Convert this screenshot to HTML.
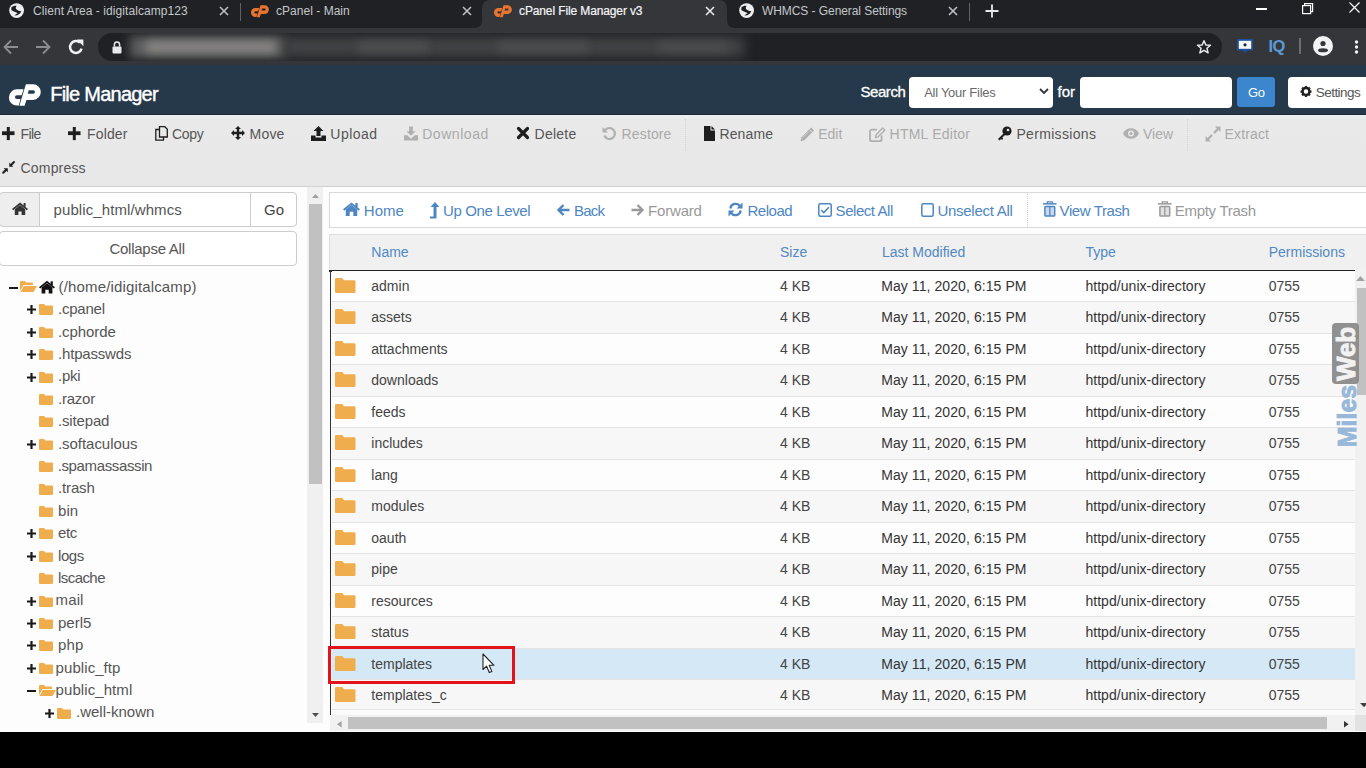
<!DOCTYPE html><html><head><meta charset="utf-8"><title>cPanel File Manager v3</title><style>
*{box-sizing:border-box}
html,body{margin:0;padding:0}
body{width:1366px;height:768px;overflow:hidden;position:relative;background:#000;font-family:"Liberation Sans",sans-serif}
.t{position:absolute;white-space:nowrap;line-height:1}
.a{position:absolute}
svg{position:absolute;overflow:visible}
</style></head><body>
<div class="a" style="left:0;top:0;width:1366px;height:28px;background:#202124"></div>
<div class="a" style="left:482px;top:0;width:245px;height:28px;background:#35363a;border-radius:8px 8px 0 0"></div>
<svg style="left:474px;top:20px" width="8" height="8"><path d="M0 8 Q8 8 8 0 L8 8 Z" fill="#35363a"/></svg>
<svg style="left:727px;top:20px" width="8" height="8"><path d="M8 8 Q0 8 0 0 L0 8 Z" fill="#35363a"/></svg>
<svg style="left:9.200000000000001px;top:3.200000000000001px" width="15.2" height="15.2" viewBox="0 0 16 16"><circle cx="8" cy="8" r="7.8" fill="#eceef0"/><path d="M2.6 4.6 C3.8 3.4 5.6 2.8 8 3 L7.2 4.6 C6.9 5.6 7.4 6.6 8.6 7.3 C10 8.1 11.6 8.6 13 8.8 C12.2 10.6 10.6 12.4 8.6 13 L5.8 13.2 C6.6 12.2 7.8 11.6 9.2 10.8 C8.2 9.6 6.4 9.4 4.6 8.6 C3.6 8 3 7.6 2.4 7.4 Z" fill="#1c1d20"/></svg>
<div class="t" style="left:33px;top:4.84px;font-size:12px;color:#c4c7cb;letter-spacing:0.07px">Client Area - idigitalcamp123</div>
<svg style="left:219px;top:6px" width="10" height="10"><path d="M1 1 L9 9 M9 1 L1 9" stroke="#bdc1c6" stroke-width="1.6"/></svg>
<div class="a" style="left:240px;top:3px;width:1px;height:18px;background:#5f6368"></div>
<svg style="left:251px;top:4.5px" width="18" height="12.4" viewBox="0 0 32 22"><path d="M14.6 5.3 H8 A8.1 8.1 0 0 0 8 21.5 H9.8 L11.5 15 H7.9 A1.9 1.9 0 0 1 7.9 11.2 H12.6 Z" fill="#e8752f"/><path fill-rule="evenodd" d="M16.9 0.3 H24 A7.8 7.8 0 0 1 24 15.9 H17.4 L15.6 21.7 H10.4 Z M19.7 6.2 H24.2 A1.75 1.75 0 0 1 24.2 9.7 H18.8 Z" fill="#e8752f"/></svg>
<div class="t" style="left:276px;top:4.84px;font-size:12px;color:#c4c7cb;letter-spacing:0.03px">cPanel - Main</div>
<svg style="left:462px;top:6px" width="10" height="10"><path d="M1 1 L9 9 M9 1 L1 9" stroke="#bdc1c6" stroke-width="1.6"/></svg>
<svg style="left:494px;top:4.5px" width="18" height="12.4" viewBox="0 0 32 22"><path d="M14.6 5.3 H8 A8.1 8.1 0 0 0 8 21.5 H9.8 L11.5 15 H7.9 A1.9 1.9 0 0 1 7.9 11.2 H12.6 Z" fill="#e8752f"/><path fill-rule="evenodd" d="M16.9 0.3 H24 A7.8 7.8 0 0 1 24 15.9 H17.4 L15.6 21.7 H10.4 Z M19.7 6.2 H24.2 A1.75 1.75 0 0 1 24.2 9.7 H18.8 Z" fill="#e8752f"/></svg>
<div class="t" style="left:519px;top:4.84px;font-size:12px;color:#f4f5f6;letter-spacing:-0.12px;-webkit-text-stroke:0.2px #f4f5f6">cPanel File Manager v3</div>
<svg style="left:705px;top:6px" width="10" height="10"><path d="M1 1 L9 9 M9 1 L1 9" stroke="#e8eaed" stroke-width="1.6"/></svg>
<svg style="left:738.9px;top:3.200000000000001px" width="15.2" height="15.2" viewBox="0 0 16 16"><circle cx="8" cy="8" r="7.8" fill="#eceef0"/><path d="M2.6 4.6 C3.8 3.4 5.6 2.8 8 3 L7.2 4.6 C6.9 5.6 7.4 6.6 8.6 7.3 C10 8.1 11.6 8.6 13 8.8 C12.2 10.6 10.6 12.4 8.6 13 L5.8 13.2 C6.6 12.2 7.8 11.6 9.2 10.8 C8.2 9.6 6.4 9.4 4.6 8.6 C3.6 8 3 7.6 2.4 7.4 Z" fill="#1c1d20"/></svg>
<div class="t" style="left:762px;top:4.84px;font-size:12px;color:#c4c7cb;letter-spacing:-0.07px">WHMCS - General Settings</div>
<svg style="left:948px;top:6px" width="10" height="10"><path d="M1 1 L9 9 M9 1 L1 9" stroke="#bdc1c6" stroke-width="1.6"/></svg>
<div class="a" style="left:969px;top:3px;width:1px;height:18px;background:#5f6368"></div>
<svg style="left:985px;top:4px" width="14" height="14"><path d="M7 0.5 V13.5 M0.5 7 H13.5" stroke="#e8eaed" stroke-width="1.8"/></svg>
<div class="a" style="left:1256px;top:8px;width:11px;height:1.5px;background:#fff"></div>
<svg style="left:1302px;top:3px" width="12" height="11"><rect x="0.6" y="2.6" width="8" height="8" fill="none" stroke="#fff" stroke-width="1.2"/><path d="M2.6 2.6 V0.6 H10.6 V8.6 H8.6" fill="none" stroke="#fff" stroke-width="1.2"/></svg>
<svg style="left:1349px;top:2px" width="11" height="11"><path d="M0.5 0.5 L10.5 10.5 M10.5 0.5 L0.5 10.5" stroke="#fff" stroke-width="1.2"/></svg>
<div class="a" style="left:0;top:28px;width:1366px;height:37px;background:#35363a"></div>
<svg style="left:3px;top:39px" width="16" height="16"><path d="M15 8 H2 M8 1.5 L1.5 8 L8 14.5" fill="none" stroke="#8c8d90" stroke-width="1.8"/></svg>
<svg style="left:35px;top:39px" width="16" height="16"><path d="M1 8 H14 M8 1.5 L14.5 8 L8 14.5" fill="none" stroke="#8c8d90" stroke-width="1.8"/></svg>
<svg style="left:68px;top:38.5px" width="16" height="16"><path d="M13.6 9.6 A5.9 5.9 0 1 1 11.9 3.6" fill="none" stroke="#f1f3f4" stroke-width="2.5"/><path d="M8.8 0.6 H15.4 V7.2 Z" fill="#f1f3f4"/></svg>
<div class="a" style="left:98px;top:33px;width:1124px;height:28px;border-radius:14px;background:#202124;overflow:hidden"><div class="a" style="left:32px;top:3px;width:156px;height:22px;background:#5c5d5f;filter:blur(5px)"></div><div class="a" style="left:48px;top:8px;width:130px;height:12px;background:#8e8c88;filter:blur(5px);opacity:.9"></div><div class="a" style="left:186px;top:4px;width:460px;height:20px;background:#424346;filter:blur(6px)"></div><div class="a" style="left:260px;top:9px;width:70px;height:10px;background:#4e4f51;filter:blur(4px)"></div><div class="a" style="left:400px;top:9px;width:90px;height:10px;background:#4d4e50;filter:blur(4px)"></div><div class="a" style="left:560px;top:9px;width:70px;height:10px;background:#4b4c4e;filter:blur(4px)"></div></div>
<svg style="left:111.5px;top:40.5px" width="10" height="13"><path d="M2.4 5.5 V3.6 A2.6 2.6 0 0 1 7.6 3.6 V5.5" fill="none" stroke="#e8eaed" stroke-width="1.5"/><rect x="0.5" y="5.5" width="9" height="7" rx="1" fill="#e8eaed"/></svg>
<svg style="left:1196px;top:39px" width="16" height="16" viewBox="0 0 24 24"><path d="M12 2.5 L14.8 9 L21.8 9.4 L16.4 13.9 L18.2 20.8 L12 17 L5.8 20.8 L7.6 13.9 L2.2 9.4 L9.2 9 Z" fill="none" stroke="#e8eaed" stroke-width="2.2" stroke-linejoin="round"/></svg>
<svg style="left:1236px;top:38px" width="18" height="17"><path d="M1 1 H17 V12.5 H11 L9 15.5 L7 12.5 H1 Z" fill="#1d4f9a"/><rect x="2.8" y="2.8" width="12.4" height="8" fill="#f4f6f8"/><circle cx="9" cy="6.8" r="1.6" fill="#102a5c"/></svg>
<div class="t" style="left:1268.5px;top:38.33px;font-size:16.5px;color:#5b9bd5;font-weight:bold;letter-spacing:-0.6px">IQ</div>
<div class="a" style="left:1299px;top:38px;width:1.5px;height:16px;background:#6b6d70"></div>
<svg style="left:1313px;top:36px" width="20" height="20"><circle cx="10" cy="10" r="10" fill="#f1f3f4"/><circle cx="10" cy="7.5" r="2.6" fill="#35363a"/><ellipse cx="10" cy="14.3" rx="5" ry="2" fill="#35363a"/></svg>
<svg style="left:1354px;top:40px" width="5" height="15"><circle cx="2.5" cy="2" r="1.7" fill="#f1f3f4"/><circle cx="2.5" cy="7" r="1.7" fill="#f1f3f4"/><circle cx="2.5" cy="12" r="1.7" fill="#f1f3f4"/></svg>
<div class="a" style="left:0;top:65px;width:1366px;height:50px;background:#26394b;border-bottom:1px solid #1b2735"></div>
<svg style="left:9px;top:83.5px" width="32" height="22" viewBox="0 0 32 22"><path d="M14.6 5.3 H8 A8.1 8.1 0 0 0 8 21.5 H9.8 L11.5 15 H7.9 A1.9 1.9 0 0 1 7.9 11.2 H12.6 Z" fill="#ffffff"/><path fill-rule="evenodd" d="M16.9 0.3 H24 A7.8 7.8 0 0 1 24 15.9 H17.4 L15.6 21.7 H10.4 Z M19.7 6.2 H24.2 A1.75 1.75 0 0 1 24.2 9.7 H18.8 Z" fill="#ffffff"/></svg>
<div class="t" style="left:50.2px;top:84.47px;font-size:20px;color:#ffffff;letter-spacing:-0.75px;-webkit-text-stroke:0.4px #fff">File Manager</div>
<div class="t" style="left:860.5px;top:83.70px;font-size:15px;color:#ffffff;letter-spacing:-0.45px;-webkit-text-stroke:0.3px #fff">Search</div>
<div class="a" style="left:909px;top:77px;width:144px;height:31px;background:#fff;border-radius:4px"></div>
<div class="t" style="left:924.2px;top:86.20px;font-size:13px;color:#6a6a6a;letter-spacing:-0.28px">All Your Files</div>
<svg style="left:1039px;top:88px" width="10" height="7"><path d="M1 1 L5 5 L9 1" fill="none" stroke="#333" stroke-width="1.8"/></svg>
<div class="t" style="left:1057.5px;top:83.70px;font-size:15px;color:#ffffff;-webkit-text-stroke:0.3px #fff">for</div>
<div class="a" style="left:1080px;top:77px;width:152px;height:31px;background:#fff;border-radius:4px"></div>
<div class="a" style="left:1237px;top:77px;width:38px;height:30px;background:#3b86cc;border-radius:3px"></div>
<div class="t" style="left:1248px;top:86.00px;font-size:13px;color:#ffffff;letter-spacing:-0.3px">Go</div>
<div class="a" style="left:1288px;top:77px;width:90px;height:31px;background:#fff;border-radius:4px"></div>
<svg style="left:1300px;top:85px" width="12" height="13" viewBox="0 0 24 24"><path d="M12 8a4 4 0 1 0 0.01 0Z M10 1 H14 L14.6 4 L17.3 5.2 L19.9 3.5 L22.7 6.3 L21 8.9 L22.1 11.5 L25 12.1 V15.9" fill="none"/><circle cx="12" cy="12" r="7" fill="none" stroke="#222" stroke-width="5"/><g stroke="#222" stroke-width="4.5"><path d="M12 1 V5 M12 19 V23 M1 12 H5 M19 12 H23 M4.2 4.2 L7 7 M17 17 L19.8 19.8 M4.2 19.8 L7 17 M17 7 L19.8 4.2"/></g></svg>
<div class="t" style="left:1315.8px;top:85.77px;font-size:13.5px;color:#555;letter-spacing:-0.55px">Settings</div>
<div class="a" style="left:0;top:115px;width:1366px;height:72px;background:linear-gradient(#eef0f1 0px,#e9e9e9 5px,#e8e8e8 100%);border-bottom:1px solid #d2d2d2"></div>
<svg style="left:1.9px;top:126.7px" width="13" height="14"><rect x="0" y="4.3" width="12.5" height="3.8" fill="#1e1e1e"/><rect x="4.8" y="0" width="3" height="13.1" fill="#1e1e1e"/></svg>
<div class="t" style="left:20.5px;top:127.05px;font-size:14px;color:#555555;letter-spacing:-0.55px">File</div>
<svg style="left:67.9px;top:126.7px" width="13" height="14"><rect x="0" y="4.3" width="12.5" height="3.8" fill="#1e1e1e"/><rect x="4.8" y="0" width="3" height="13.1" fill="#1e1e1e"/></svg>
<div class="t" style="left:87px;top:127.05px;font-size:14px;color:#555555;letter-spacing:0.16px">Folder</div>
<svg style="left:155px;top:126px" width="13" height="15"><path d="M4.5 3.5 H0.8 V14.2 H8.5 V11" fill="none" stroke="#1e1e1e" stroke-width="1.3"/><path d="M4.5 0.7 H9.8 L12.3 3.2 V11 H4.5 Z" fill="none" stroke="#1e1e1e" stroke-width="1.3"/></svg>
<div class="t" style="left:172px;top:127.05px;font-size:14px;color:#555555;letter-spacing:-0.29px">Copy</div>
<svg style="left:231px;top:126px" width="14" height="14" viewBox="0 0 14 14"><path d="M7 0 L10 3 H8.2 V5.8 H11 V4 L14 7 L11 10 V8.2 H8.2 V11 H10 L7 14 L4 11 H5.8 V8.2 H3 V10 L0 7 L3 4 V5.8 H5.8 V3 H4 Z" fill="#1e1e1e"/></svg>
<div class="t" style="left:249.5px;top:127.05px;font-size:14px;color:#555555;letter-spacing:0.22px">Move</div>
<svg style="left:311px;top:126px" width="15" height="15" viewBox="0 0 15 15"><path d="M7.5 0 L12.5 5 H9.5 V10 H5.5 V5 H2.5 Z" fill="#1e1e1e"/><path d="M0 9.5 H4.5 V11.5 H10.5 V9.5 H15 V15 H0 Z" fill="#1e1e1e"/></svg>
<div class="t" style="left:330.3px;top:127.05px;font-size:14px;color:#555555;letter-spacing:0.47px">Upload</div>
<svg style="left:404px;top:126px" width="14" height="15" viewBox="0 0 15 15"><path d="M5.5 0 H9.5 V5 H12.5 L7.5 10 L2.5 5 H5.5 Z" fill="#b0b0b0"/><path d="M0 9.5 H3.5 L7.5 13 L11.5 9.5 H15 V15 H0 Z" fill="#b0b0b0"/></svg>
<div class="t" style="left:422.2px;top:127.05px;font-size:14px;color:#aaaaaa;letter-spacing:0.55px">Download</div>
<svg style="left:517px;top:127px" width="12" height="12"><path d="M1.5 1.5 L10.5 10.5 M10.5 1.5 L1.5 10.5" stroke="#1e1e1e" stroke-width="3.2" stroke-linecap="round"/></svg>
<div class="t" style="left:534.5px;top:127.05px;font-size:14px;color:#555555;letter-spacing:0.27px">Delete</div>
<svg style="left:602px;top:126px" width="15" height="15" viewBox="0 0 15 15"><path d="M3.2 4 A5.5 5.5 0 1 1 2.3 9.5" fill="none" stroke="#b0b0b0" stroke-width="2.2"/><path d="M0.5 1 V6.5 H6 Z" fill="#b0b0b0"/></svg>
<div class="t" style="left:621.6px;top:127.05px;font-size:14px;color:#aaaaaa;letter-spacing:0.13px">Restore</div>
<div class="a" style="left:685px;top:119px;width:0;height:32px;border-left:1px dotted #d3d3d3"></div>
<svg style="left:704px;top:126px" width="11" height="15" viewBox="0 0 11 15"><path d="M0 0 H6.5 V4.5 H11 V15 H0 Z" fill="#1e1e1e"/><path d="M7.5 0 L11 3.5 H7.5 Z" fill="#1e1e1e"/></svg>
<div class="t" style="left:719.4px;top:127.05px;font-size:14px;color:#555555;letter-spacing:0.14px">Rename</div>
<svg style="left:799.8px;top:127px" width="15" height="15" viewBox="0 0 15 15"><path d="M11 0.6 L14 3.6 L4.4 13.2 L0.6 14.2 L1.5 10.2 Z" fill="#b0b0b0"/><path d="M9.2 2.4 L12.2 5.4" stroke="#e8e8e8" stroke-width="0.9"/><path d="M2.6 10.6 L8.6 4.6" stroke="#d2d2d2" stroke-width="0.8"/></svg>
<div class="t" style="left:818.2px;top:127.05px;font-size:14px;color:#aaaaaa;letter-spacing:-0.01px">Edit</div>
<svg style="left:869px;top:126.5px" width="17" height="15" viewBox="0 0 17 15"><path d="M8 2.6 H3 Q1 2.6 1 4.6 V12.2 Q1 14.2 3 14.2 H10.6 Q12.6 14.2 12.6 12.2 V8.6" fill="none" stroke="#b0b0b0" stroke-width="1.8"/><path d="M13.6 1 L15.8 3.2 L9.2 9.8 L6.4 10.6 L7.2 7.8 Z" fill="none" stroke="#b0b0b0" stroke-width="1.4" stroke-linejoin="round"/></svg>
<div class="t" style="left:889.6px;top:127.05px;font-size:14px;color:#aaaaaa;letter-spacing:0.23px">HTML Editor</div>
<svg style="left:997px;top:126px" width="15" height="15" viewBox="0 0 15 15"><circle cx="10" cy="5" r="4.6" fill="#1e1e1e"/><circle cx="11" cy="4" r="1.3" fill="#e8e8e8"/><path d="M7 7 L1 13 L2.5 14.5 L4 13 L5 14 L6.2 12.8 L5.2 11.8 L9 8" fill="#1e1e1e"/></svg>
<div class="t" style="left:1016.4px;top:127.05px;font-size:14px;color:#555555;letter-spacing:0.33px">Permissions</div>
<svg style="left:1123px;top:128px" width="16" height="11" viewBox="0 0 16 11"><path d="M0 5.5 C3 -1.5 13 -1.5 16 5.5 C13 12.5 3 12.5 0 5.5 Z" fill="#b0b0b0"/><circle cx="8" cy="5.5" r="3" fill="#e8e8e8"/><circle cx="8" cy="5.5" r="1.6" fill="#b0b0b0"/></svg>
<div class="t" style="left:1143px;top:127.05px;font-size:14px;color:#aaaaaa;letter-spacing:-0.03px">View</div>
<div class="a" style="left:1187px;top:119px;width:0;height:32px;border-left:1px dotted #d3d3d3"></div>
<svg style="left:1205px;top:125.5px" width="16" height="16" viewBox="0 0 16 16"><path d="M10 0.6 H15.4 V6 Z M0.6 10 V15.4 H6 Z" fill="#b0b0b0"/><path d="M13.2 2.8 L9.6 6.4 M2.8 13.2 L6.4 9.6" stroke="#b0b0b0" stroke-width="2.2" stroke-linecap="round"/></svg>
<div class="t" style="left:1224.6px;top:127.05px;font-size:14px;color:#aaaaaa;letter-spacing:0.14px">Extract</div>
<svg style="left:2px;top:161px" width="13" height="13" viewBox="0 0 13 13"><path d="M12 1 L8.8 4.2 M1.2 11.8 L4.2 8.8" stroke="#1e1e1e" stroke-width="2" stroke-linecap="round"/><path d="M7.3 5.8 V1.6 L11.3 5.8 Z M5.8 7.3 V11.3 L1.6 7.3 Z" fill="#1e1e1e"/></svg>
<div class="t" style="left:20.5px;top:161.35px;font-size:14px;color:#555555;letter-spacing:0.19px">Compress</div>
<div class="a" style="left:0;top:187px;width:1366px;height:545px;background:#fdfdfd"></div>
<div class="a" style="left:-1px;top:192px;width:41px;height:35px;background:#eeeeee;border:1px solid #cccccc;border-radius:4px 0 0 4px"></div>
<svg style="left:12px;top:202px" width="16" height="13" viewBox="0 0 16 13"><path d="M8 0.5 L16 7 L14.8 8.3 L8 2.8 L1.2 8.3 L0 7 Z" fill="#333"/><path d="M2.8 7.2 L8 3 L13.2 7.2 V13 H9.6 V9.4 H6.4 V13 H2.8 Z" fill="#333"/><rect x="11.6" y="1" width="2" height="3.6" fill="#333"/></svg>
<div class="a" style="left:39px;top:192px;width:212px;height:35px;background:#fff;border:1px solid #cccccc"></div>
<div class="t" style="left:53.5px;top:202.30px;font-size:15px;color:#555;letter-spacing:0.1px">public_html/whmcs</div>
<div class="a" style="left:250px;top:192px;width:47px;height:35px;background:#fff;border:1px solid #cccccc;border-radius:0 4px 4px 0"></div>
<div class="t" style="left:264px;top:202.30px;font-size:15px;color:#444;">Go</div>
<div class="a" style="left:-1px;top:231px;width:298px;height:35px;background:#fff;border:1px solid #cccccc;border-radius:4px"></div>
<div class="t" style="left:109.4px;top:241.30px;font-size:15px;color:#555;letter-spacing:-0.25px">Collapse All</div>
<div class="a" style="left:0;top:270px;width:305px;height:452px;overflow:hidden">
<div class="a" style="left:9px;top:16.5px;width:9px;height:2.2px;background:#1a1a1a"></div>
<svg style="left:20px;top:10.5px" width="17" height="11" viewBox="0 0 17 11"><path d="M0 1 Q0 0 1 0 H5 L6.3 1.6 H12 Q13 1.6 13 2.6 V4 H3.5 L0 10 Z" fill="#f0ad4e"/><path d="M3.8 5 H17 L13.5 11 H0.5 Z" fill="#f0ad4e"/></svg>
<svg style="left:39px;top:9.5px" width="16" height="14" viewBox="0 0 16 13"><path d="M8 0.3 L16 6.8 L14.8 8.1 L8 2.6 L1.2 8.1 L0 6.8 Z" fill="#111"/><path d="M2.6 7 L8 2.8 L13.4 7 V13 H9.7 V9.2 H6.3 V13 H2.6 Z" fill="#111"/><rect x="11.6" y="0.8" width="2.2" height="3.8" fill="#111"/></svg>
<div class="t" style="left:58.6px;top:8.80px;font-size:15px;color:#555;letter-spacing:0.15px">(/home/idigitalcamp)</div>
<svg style="left:27px;top:35.39999999999998px" width="9" height="9"><path d="M4.5 0 V9 M0 4.5 H9" stroke="#1a1a1a" stroke-width="2.2"/></svg>
<svg style="left:39px;top:34.39999999999998px" width="14" height="11" viewBox="0 0 14 11"><path d="M0 1 Q0 0 1 0 H5 L6.3 1.6 H13 Q14 1.6 14 2.6 V10 Q14 11 13 11 H1 Q0 11 0 10 Z" fill="#f0ad4e"/></svg>
<div class="t" style="left:58px;top:31.20px;font-size:15px;color:#555;letter-spacing:-0.23px">.cpanel</div>
<svg style="left:27px;top:57.80000000000001px" width="9" height="9"><path d="M4.5 0 V9 M0 4.5 H9" stroke="#1a1a1a" stroke-width="2.2"/></svg>
<svg style="left:39px;top:56.80000000000001px" width="14" height="11" viewBox="0 0 14 11"><path d="M0 1 Q0 0 1 0 H5 L6.3 1.6 H13 Q14 1.6 14 2.6 V10 Q14 11 13 11 H1 Q0 11 0 10 Z" fill="#f0ad4e"/></svg>
<div class="t" style="left:58px;top:53.60px;font-size:15px;color:#555;letter-spacing:-0.08px">.cphorde</div>
<svg style="left:27px;top:80.19999999999999px" width="9" height="9"><path d="M4.5 0 V9 M0 4.5 H9" stroke="#1a1a1a" stroke-width="2.2"/></svg>
<svg style="left:39px;top:79.19999999999999px" width="14" height="11" viewBox="0 0 14 11"><path d="M0 1 Q0 0 1 0 H5 L6.3 1.6 H13 Q14 1.6 14 2.6 V10 Q14 11 13 11 H1 Q0 11 0 10 Z" fill="#f0ad4e"/></svg>
<div class="t" style="left:58px;top:76.00px;font-size:15px;color:#555;letter-spacing:-0.18px">.htpasswds</div>
<svg style="left:27px;top:102.60000000000002px" width="9" height="9"><path d="M4.5 0 V9 M0 4.5 H9" stroke="#1a1a1a" stroke-width="2.2"/></svg>
<svg style="left:39px;top:101.60000000000002px" width="14" height="11" viewBox="0 0 14 11"><path d="M0 1 Q0 0 1 0 H5 L6.3 1.6 H13 Q14 1.6 14 2.6 V10 Q14 11 13 11 H1 Q0 11 0 10 Z" fill="#f0ad4e"/></svg>
<div class="t" style="left:58px;top:98.40px;font-size:15px;color:#555;letter-spacing:-0.25px">.pki</div>
<svg style="left:39px;top:124.0px" width="14" height="11" viewBox="0 0 14 11"><path d="M0 1 Q0 0 1 0 H5 L6.3 1.6 H13 Q14 1.6 14 2.6 V10 Q14 11 13 11 H1 Q0 11 0 10 Z" fill="#f0ad4e"/></svg>
<div class="t" style="left:58px;top:120.80px;font-size:15px;color:#555;letter-spacing:-0.23px">.razor</div>
<svg style="left:39px;top:146.39999999999998px" width="14" height="11" viewBox="0 0 14 11"><path d="M0 1 Q0 0 1 0 H5 L6.3 1.6 H13 Q14 1.6 14 2.6 V10 Q14 11 13 11 H1 Q0 11 0 10 Z" fill="#f0ad4e"/></svg>
<div class="t" style="left:58px;top:143.20px;font-size:15px;color:#555;letter-spacing:-0.16px">.sitepad</div>
<svg style="left:27px;top:169.79999999999995px" width="9" height="9"><path d="M4.5 0 V9 M0 4.5 H9" stroke="#1a1a1a" stroke-width="2.2"/></svg>
<svg style="left:39px;top:168.79999999999995px" width="14" height="11" viewBox="0 0 14 11"><path d="M0 1 Q0 0 1 0 H5 L6.3 1.6 H13 Q14 1.6 14 2.6 V10 Q14 11 13 11 H1 Q0 11 0 10 Z" fill="#f0ad4e"/></svg>
<div class="t" style="left:58px;top:165.60px;font-size:15px;color:#555;letter-spacing:-0.05px">.softaculous</div>
<svg style="left:39px;top:191.2px" width="14" height="11" viewBox="0 0 14 11"><path d="M0 1 Q0 0 1 0 H5 L6.3 1.6 H13 Q14 1.6 14 2.6 V10 Q14 11 13 11 H1 Q0 11 0 10 Z" fill="#f0ad4e"/></svg>
<div class="t" style="left:57.7px;top:188.00px;font-size:15px;color:#555;letter-spacing:-0.37px">.spamassassin</div>
<svg style="left:39px;top:213.60000000000002px" width="14" height="11" viewBox="0 0 14 11"><path d="M0 1 Q0 0 1 0 H5 L6.3 1.6 H13 Q14 1.6 14 2.6 V10 Q14 11 13 11 H1 Q0 11 0 10 Z" fill="#f0ad4e"/></svg>
<div class="t" style="left:58px;top:210.40px;font-size:15px;color:#555;letter-spacing:-0.14px">.trash</div>
<svg style="left:39px;top:236.0px" width="14" height="11" viewBox="0 0 14 11"><path d="M0 1 Q0 0 1 0 H5 L6.3 1.6 H13 Q14 1.6 14 2.6 V10 Q14 11 13 11 H1 Q0 11 0 10 Z" fill="#f0ad4e"/></svg>
<div class="t" style="left:58px;top:232.80px;font-size:15px;color:#555;letter-spacing:0.09px">bin</div>
<svg style="left:27px;top:259.4px" width="9" height="9"><path d="M4.5 0 V9 M0 4.5 H9" stroke="#1a1a1a" stroke-width="2.2"/></svg>
<svg style="left:39px;top:258.4px" width="14" height="11" viewBox="0 0 14 11"><path d="M0 1 Q0 0 1 0 H5 L6.3 1.6 H13 Q14 1.6 14 2.6 V10 Q14 11 13 11 H1 Q0 11 0 10 Z" fill="#f0ad4e"/></svg>
<div class="t" style="left:58px;top:255.20px;font-size:15px;color:#555;letter-spacing:-0.35px">etc</div>
<svg style="left:27px;top:281.79999999999995px" width="9" height="9"><path d="M4.5 0 V9 M0 4.5 H9" stroke="#1a1a1a" stroke-width="2.2"/></svg>
<svg style="left:39px;top:280.79999999999995px" width="14" height="11" viewBox="0 0 14 11"><path d="M0 1 Q0 0 1 0 H5 L6.3 1.6 H13 Q14 1.6 14 2.6 V10 Q14 11 13 11 H1 Q0 11 0 10 Z" fill="#f0ad4e"/></svg>
<div class="t" style="left:58px;top:277.60px;font-size:15px;color:#555;letter-spacing:-0.44px">logs</div>
<svg style="left:39px;top:303.20000000000005px" width="14" height="11" viewBox="0 0 14 11"><path d="M0 1 Q0 0 1 0 H5 L6.3 1.6 H13 Q14 1.6 14 2.6 V10 Q14 11 13 11 H1 Q0 11 0 10 Z" fill="#f0ad4e"/></svg>
<div class="t" style="left:58px;top:300.00px;font-size:15px;color:#555;letter-spacing:-0.56px">lscache</div>
<svg style="left:27px;top:326.5999999999999px" width="9" height="9"><path d="M4.5 0 V9 M0 4.5 H9" stroke="#1a1a1a" stroke-width="2.2"/></svg>
<svg style="left:39px;top:325.5999999999999px" width="14" height="11" viewBox="0 0 14 11"><path d="M0 1 Q0 0 1 0 H5 L6.3 1.6 H13 Q14 1.6 14 2.6 V10 Q14 11 13 11 H1 Q0 11 0 10 Z" fill="#f0ad4e"/></svg>
<div class="t" style="left:55.6px;top:322.40px;font-size:15px;color:#555;letter-spacing:0.10px">mail</div>
<svg style="left:27px;top:349.0px" width="9" height="9"><path d="M4.5 0 V9 M0 4.5 H9" stroke="#1a1a1a" stroke-width="2.2"/></svg>
<svg style="left:39px;top:348.0px" width="14" height="11" viewBox="0 0 14 11"><path d="M0 1 Q0 0 1 0 H5 L6.3 1.6 H13 Q14 1.6 14 2.6 V10 Q14 11 13 11 H1 Q0 11 0 10 Z" fill="#f0ad4e"/></svg>
<div class="t" style="left:58px;top:344.80px;font-size:15px;color:#555;letter-spacing:0.01px">perl5</div>
<svg style="left:27px;top:371.4px" width="9" height="9"><path d="M4.5 0 V9 M0 4.5 H9" stroke="#1a1a1a" stroke-width="2.2"/></svg>
<svg style="left:39px;top:370.4px" width="14" height="11" viewBox="0 0 14 11"><path d="M0 1 Q0 0 1 0 H5 L6.3 1.6 H13 Q14 1.6 14 2.6 V10 Q14 11 13 11 H1 Q0 11 0 10 Z" fill="#f0ad4e"/></svg>
<div class="t" style="left:58px;top:367.20px;font-size:15px;color:#555;letter-spacing:0.14px">php</div>
<svg style="left:27px;top:393.79999999999995px" width="9" height="9"><path d="M4.5 0 V9 M0 4.5 H9" stroke="#1a1a1a" stroke-width="2.2"/></svg>
<svg style="left:39px;top:392.79999999999995px" width="14" height="11" viewBox="0 0 14 11"><path d="M0 1 Q0 0 1 0 H5 L6.3 1.6 H13 Q14 1.6 14 2.6 V10 Q14 11 13 11 H1 Q0 11 0 10 Z" fill="#f0ad4e"/></svg>
<div class="t" style="left:55.6px;top:389.60px;font-size:15px;color:#555;letter-spacing:0.07px">public_ftp</div>
<div class="a" style="left:27px;top:419.70000000000005px;width:9px;height:2.2px;background:#1a1a1a"></div>
<svg style="left:39px;top:414.70000000000005px" width="17" height="11" viewBox="0 0 17 11"><path d="M0 1 Q0 0 1 0 H5 L6.3 1.6 H12 Q13 1.6 13 2.6 V4 H3.5 L0 10 Z" fill="#f0ad4e"/><path d="M3.8 5 H17 L13.5 11 H0.5 Z" fill="#f0ad4e"/></svg>
<div class="t" style="left:55.6px;top:412.00px;font-size:15px;color:#555;letter-spacing:0.08px">public_html</div>
<svg style="left:45px;top:438.5999999999999px" width="9" height="9"><path d="M4.5 0 V9 M0 4.5 H9" stroke="#1a1a1a" stroke-width="2.2"/></svg>
<svg style="left:57px;top:437.5999999999999px" width="14" height="11" viewBox="0 0 14 11"><path d="M0 1 Q0 0 1 0 H5 L6.3 1.6 H13 Q14 1.6 14 2.6 V10 Q14 11 13 11 H1 Q0 11 0 10 Z" fill="#f0ad4e"/></svg>
<div class="t" style="left:76px;top:434.40px;font-size:15px;color:#555;letter-spacing:0.00px">.well-known</div>
</div>
<div class="a" style="left:307px;top:187px;width:16px;height:536px;background:#f0f0f0"></div>
<svg style="left:312px;top:194px" width="7" height="4"><path d="M0 4 L3.5 0 L7 4 Z" fill="#a0a0a0"/></svg>
<div class="a" style="left:309px;top:204px;width:13px;height:280px;background:#c1c1c1"></div>
<svg style="left:312px;top:713px" width="7" height="4"><path d="M0 0 L3.5 4 L7 0 Z" fill="#505050"/></svg>
<div class="a" style="left:329px;top:192px;width:1050px;height:36px;background:#fff;border:1px solid #d9d9d9"></div>
<svg style="left:343px;top:202px" width="17" height="14" viewBox="0 0 16 13"><path d="M8 0.3 L16 6.8 L14.8 8.1 L8 2.6 L1.2 8.1 L0 6.8 Z" fill="#4d86c2"/><path d="M2.6 7 L8 2.8 L13.4 7 V13 H9.7 V9.2 H6.3 V13 H2.6 Z" fill="#4d86c2"/><rect x="11.6" y="0.8" width="2.2" height="3.8" fill="#4d86c2"/></svg>
<div class="t" style="left:363.8px;top:202.80px;font-size:15px;color:#4d86c2;letter-spacing:0px">Home</div>
<svg style="left:429px;top:202px" width="11" height="17" viewBox="0 0 11 17"><path d="M6 0 L10.5 5 H7.5 V16.5 H1 V14.5 H4.5 V5 H1.5 Z" fill="#4d86c2"/></svg>
<div class="t" style="left:443.1px;top:202.80px;font-size:15px;color:#4d86c2;letter-spacing:-0.38px">Up One Level</div>
<svg style="left:557px;top:204px" width="13" height="12" viewBox="0 0 13 12"><path d="M12.5 6 H2 M6.5 1 L1.5 6 L6.5 11" fill="none" stroke="#4d86c2" stroke-width="2.4"/></svg>
<div class="t" style="left:573.9px;top:202.80px;font-size:15px;color:#4d86c2;letter-spacing:-0.74px">Back</div>
<svg style="left:631px;top:204px" width="13" height="12" viewBox="0 0 13 12"><path d="M0.5 6 H11 M6.5 1 L11.5 6 L6.5 11" fill="none" stroke="#999999" stroke-width="2.4"/></svg>
<div class="t" style="left:648.1px;top:202.80px;font-size:15px;color:#999999;letter-spacing:-0.19px">Forward</div>
<svg style="left:728px;top:202px" width="15" height="15" viewBox="0 0 15 15"><path d="M2.3 6.5 A5.4 5.4 0 0 1 12.2 4.3" fill="none" stroke="#4d86c2" stroke-width="2.2"/><path d="M14.5 0.5 V6.5 H8.5 Z" fill="#4d86c2"/><path d="M12.7 8.5 A5.4 5.4 0 0 1 2.8 10.7" fill="none" stroke="#4d86c2" stroke-width="2.2"/><path d="M0.5 14.5 V8.5 H6.5 Z" fill="#4d86c2"/></svg>
<div class="t" style="left:747.5px;top:202.80px;font-size:15px;color:#4d86c2;letter-spacing:-0.47px">Reload</div>
<svg style="left:818px;top:203px" width="14" height="14" viewBox="0 0 14 14"><rect x="0.8" y="0.8" width="12.4" height="12.4" rx="1.5" fill="none" stroke="#4d86c2" stroke-width="1.5"/><path d="M3.2 7 L5.8 9.6 L10.8 4.2" fill="none" stroke="#4d86c2" stroke-width="1.5"/></svg>
<div class="t" style="left:835.6px;top:202.80px;font-size:15px;color:#4d86c2;letter-spacing:-0.45px">Select All</div>
<svg style="left:921px;top:203px" width="13" height="14" viewBox="0 0 13 14"><rect x="0.8" y="0.8" width="11.4" height="12.4" rx="1.5" fill="none" stroke="#4d86c2" stroke-width="1.5"/></svg>
<div class="t" style="left:937.4px;top:202.80px;font-size:15px;color:#4d86c2;letter-spacing:-0.26px">Unselect All</div>
<div class="a" style="left:1027px;top:193px;width:0;height:34px;border-left:1px dotted #cfcfcf"></div>
<svg style="left:1042.5px;top:201px" width="14" height="16" viewBox="0 0 14 16"><path d="M4.3 2.6 V0.9 H9.3 V2.6" fill="none" stroke="#4d86c2" stroke-width="1.3"/><rect x="0" y="2.1" width="13.6" height="1.5" fill="#4d86c2"/><rect x="1.9" y="5.4" width="9.8" height="9.6" rx="0.8" fill="#4d86c2" fill-opacity="0.3" stroke="#4d86c2" stroke-width="1.5"/><path d="M6.8 5.5 V15" stroke="#4d86c2" stroke-width="1.3"/></svg>
<div class="t" style="left:1059.6px;top:202.80px;font-size:15px;color:#4d86c2;letter-spacing:-0.41px">View Trash</div>
<svg style="left:1157.5px;top:201px" width="14" height="16" viewBox="0 0 14 16"><path d="M4.3 2.6 V0.9 H9.3 V2.6" fill="none" stroke="#999999" stroke-width="1.3"/><rect x="0" y="2.1" width="13.6" height="1.5" fill="#999999"/><rect x="1.9" y="5.4" width="9.8" height="9.6" rx="0.8" fill="#999999" fill-opacity="0.3" stroke="#999999" stroke-width="1.5"/><path d="M6.8 5.5 V15" stroke="#999999" stroke-width="1.3"/></svg>
<div class="t" style="left:1174.8px;top:202.80px;font-size:15px;color:#999999;letter-spacing:-0.3px">Empty Trash</div>
<div class="a" style="left:329px;top:234px;width:1040px;height:37px;background:#f0f0f0;border-top:1px solid #dedede;border-left:1px solid #dedede"></div>
<div class="t" style="left:371.3px;top:244.95px;font-size:14px;color:#5089c4;">Name</div>
<div class="t" style="left:780px;top:244.95px;font-size:14px;color:#5089c4;">Size</div>
<div class="t" style="left:882px;top:244.95px;font-size:14px;color:#5089c4;">Last Modified</div>
<div class="t" style="left:1085.5px;top:244.95px;font-size:14px;color:#5089c4;">Type</div>
<div class="t" style="left:1268.7px;top:244.95px;font-size:14px;color:#5089c4;">Permissions</div>
<div class="a" style="left:329px;top:270px;width:1027px;height:445px;overflow:hidden;background:#fbfbfb">
<div class="a" style="left:0;top:0;width:1027px;height:2px;background:#222"></div>
<div class="a" style="left:1px;top:0;width:1.3px;height:445px;background:#333"></div>
<div class="a" style="left:2.6px;top:0.6px;width:1024px;height:31.5px;background:#fdfdfd;border-bottom:1px solid #e4e4e4"></div>
<svg style="left:6px;top:7.699999999999999px" width="20.5" height="15" viewBox="0 0 20 14.6"><path d="M0 1.2 Q0 0 1.2 0 H7 L8.8 2.2 H18.8 Q20 2.2 20 3.4 V13.4 Q20 14.6 18.8 14.6 H1.2 Q0 14.6 0 13.4 Z" fill="#f0ad4e"/></svg>
<div class="t" style="left:42.3px;top:8.75px;font-size:14px;color:#444;">admin</div>
<div class="t" style="left:451px;top:8.75px;font-size:14px;color:#444;">4 KB</div>
<div class="t" style="left:552.2px;top:8.75px;font-size:14px;color:#333;letter-spacing:0.08px">May 11, 2020, 6:15 PM</div>
<div class="t" style="left:756.4px;top:8.75px;font-size:14px;color:#333;letter-spacing:0.05px">httpd/unix-directory</div>
<div class="t" style="left:939.7px;top:8.75px;font-size:14px;color:#444;">0755</div>
<div class="a" style="left:2.6px;top:32.1px;width:1024px;height:31.5px;background:#f7f7f7;border-bottom:1px solid #e4e4e4"></div>
<svg style="left:6px;top:39.2px" width="20.5" height="15" viewBox="0 0 20 14.6"><path d="M0 1.2 Q0 0 1.2 0 H7 L8.8 2.2 H18.8 Q20 2.2 20 3.4 V13.4 Q20 14.6 18.8 14.6 H1.2 Q0 14.6 0 13.4 Z" fill="#f0ad4e"/></svg>
<div class="t" style="left:42.3px;top:40.25px;font-size:14px;color:#444;">assets</div>
<div class="t" style="left:451px;top:40.25px;font-size:14px;color:#444;">4 KB</div>
<div class="t" style="left:552.2px;top:40.25px;font-size:14px;color:#333;letter-spacing:0.08px">May 11, 2020, 6:15 PM</div>
<div class="t" style="left:756.4px;top:40.25px;font-size:14px;color:#333;letter-spacing:0.05px">httpd/unix-directory</div>
<div class="t" style="left:939.7px;top:40.25px;font-size:14px;color:#444;">0755</div>
<div class="a" style="left:2.6px;top:63.6px;width:1024px;height:31.5px;background:#fdfdfd;border-bottom:1px solid #e4e4e4"></div>
<svg style="left:6px;top:70.7px" width="20.5" height="15" viewBox="0 0 20 14.6"><path d="M0 1.2 Q0 0 1.2 0 H7 L8.8 2.2 H18.8 Q20 2.2 20 3.4 V13.4 Q20 14.6 18.8 14.6 H1.2 Q0 14.6 0 13.4 Z" fill="#f0ad4e"/></svg>
<div class="t" style="left:42.3px;top:71.75px;font-size:14px;color:#444;">attachments</div>
<div class="t" style="left:451px;top:71.75px;font-size:14px;color:#444;">4 KB</div>
<div class="t" style="left:552.2px;top:71.75px;font-size:14px;color:#333;letter-spacing:0.08px">May 11, 2020, 6:15 PM</div>
<div class="t" style="left:756.4px;top:71.75px;font-size:14px;color:#333;letter-spacing:0.05px">httpd/unix-directory</div>
<div class="t" style="left:939.7px;top:71.75px;font-size:14px;color:#444;">0755</div>
<div class="a" style="left:2.6px;top:95.1px;width:1024px;height:31.5px;background:#f7f7f7;border-bottom:1px solid #e4e4e4"></div>
<svg style="left:6px;top:102.19999999999999px" width="20.5" height="15" viewBox="0 0 20 14.6"><path d="M0 1.2 Q0 0 1.2 0 H7 L8.8 2.2 H18.8 Q20 2.2 20 3.4 V13.4 Q20 14.6 18.8 14.6 H1.2 Q0 14.6 0 13.4 Z" fill="#f0ad4e"/></svg>
<div class="t" style="left:42.3px;top:103.25px;font-size:14px;color:#444;">downloads</div>
<div class="t" style="left:451px;top:103.25px;font-size:14px;color:#444;">4 KB</div>
<div class="t" style="left:552.2px;top:103.25px;font-size:14px;color:#333;letter-spacing:0.08px">May 11, 2020, 6:15 PM</div>
<div class="t" style="left:756.4px;top:103.25px;font-size:14px;color:#333;letter-spacing:0.05px">httpd/unix-directory</div>
<div class="t" style="left:939.7px;top:103.25px;font-size:14px;color:#444;">0755</div>
<div class="a" style="left:2.6px;top:126.6px;width:1024px;height:31.5px;background:#fdfdfd;border-bottom:1px solid #e4e4e4"></div>
<svg style="left:6px;top:133.7px" width="20.5" height="15" viewBox="0 0 20 14.6"><path d="M0 1.2 Q0 0 1.2 0 H7 L8.8 2.2 H18.8 Q20 2.2 20 3.4 V13.4 Q20 14.6 18.8 14.6 H1.2 Q0 14.6 0 13.4 Z" fill="#f0ad4e"/></svg>
<div class="t" style="left:42.3px;top:134.75px;font-size:14px;color:#444;">feeds</div>
<div class="t" style="left:451px;top:134.75px;font-size:14px;color:#444;">4 KB</div>
<div class="t" style="left:552.2px;top:134.75px;font-size:14px;color:#333;letter-spacing:0.08px">May 11, 2020, 6:15 PM</div>
<div class="t" style="left:756.4px;top:134.75px;font-size:14px;color:#333;letter-spacing:0.05px">httpd/unix-directory</div>
<div class="t" style="left:939.7px;top:134.75px;font-size:14px;color:#444;">0755</div>
<div class="a" style="left:2.6px;top:158.1px;width:1024px;height:31.5px;background:#f7f7f7;border-bottom:1px solid #e4e4e4"></div>
<svg style="left:6px;top:165.2px" width="20.5" height="15" viewBox="0 0 20 14.6"><path d="M0 1.2 Q0 0 1.2 0 H7 L8.8 2.2 H18.8 Q20 2.2 20 3.4 V13.4 Q20 14.6 18.8 14.6 H1.2 Q0 14.6 0 13.4 Z" fill="#f0ad4e"/></svg>
<div class="t" style="left:42.3px;top:166.25px;font-size:14px;color:#444;">includes</div>
<div class="t" style="left:451px;top:166.25px;font-size:14px;color:#444;">4 KB</div>
<div class="t" style="left:552.2px;top:166.25px;font-size:14px;color:#333;letter-spacing:0.08px">May 11, 2020, 6:15 PM</div>
<div class="t" style="left:756.4px;top:166.25px;font-size:14px;color:#333;letter-spacing:0.05px">httpd/unix-directory</div>
<div class="t" style="left:939.7px;top:166.25px;font-size:14px;color:#444;">0755</div>
<div class="a" style="left:2.6px;top:189.6px;width:1024px;height:31.5px;background:#fdfdfd;border-bottom:1px solid #e4e4e4"></div>
<svg style="left:6px;top:196.7px" width="20.5" height="15" viewBox="0 0 20 14.6"><path d="M0 1.2 Q0 0 1.2 0 H7 L8.8 2.2 H18.8 Q20 2.2 20 3.4 V13.4 Q20 14.6 18.8 14.6 H1.2 Q0 14.6 0 13.4 Z" fill="#f0ad4e"/></svg>
<div class="t" style="left:42.3px;top:197.75px;font-size:14px;color:#444;">lang</div>
<div class="t" style="left:451px;top:197.75px;font-size:14px;color:#444;">4 KB</div>
<div class="t" style="left:552.2px;top:197.75px;font-size:14px;color:#333;letter-spacing:0.08px">May 11, 2020, 6:15 PM</div>
<div class="t" style="left:756.4px;top:197.75px;font-size:14px;color:#333;letter-spacing:0.05px">httpd/unix-directory</div>
<div class="t" style="left:939.7px;top:197.75px;font-size:14px;color:#444;">0755</div>
<div class="a" style="left:2.6px;top:221.1px;width:1024px;height:31.5px;background:#f7f7f7;border-bottom:1px solid #e4e4e4"></div>
<svg style="left:6px;top:228.2px" width="20.5" height="15" viewBox="0 0 20 14.6"><path d="M0 1.2 Q0 0 1.2 0 H7 L8.8 2.2 H18.8 Q20 2.2 20 3.4 V13.4 Q20 14.6 18.8 14.6 H1.2 Q0 14.6 0 13.4 Z" fill="#f0ad4e"/></svg>
<div class="t" style="left:42.3px;top:229.25px;font-size:14px;color:#444;">modules</div>
<div class="t" style="left:451px;top:229.25px;font-size:14px;color:#444;">4 KB</div>
<div class="t" style="left:552.2px;top:229.25px;font-size:14px;color:#333;letter-spacing:0.08px">May 11, 2020, 6:15 PM</div>
<div class="t" style="left:756.4px;top:229.25px;font-size:14px;color:#333;letter-spacing:0.05px">httpd/unix-directory</div>
<div class="t" style="left:939.7px;top:229.25px;font-size:14px;color:#444;">0755</div>
<div class="a" style="left:2.6px;top:252.6px;width:1024px;height:31.5px;background:#fdfdfd;border-bottom:1px solid #e4e4e4"></div>
<svg style="left:6px;top:259.7px" width="20.5" height="15" viewBox="0 0 20 14.6"><path d="M0 1.2 Q0 0 1.2 0 H7 L8.8 2.2 H18.8 Q20 2.2 20 3.4 V13.4 Q20 14.6 18.8 14.6 H1.2 Q0 14.6 0 13.4 Z" fill="#f0ad4e"/></svg>
<div class="t" style="left:42.3px;top:260.75px;font-size:14px;color:#444;">oauth</div>
<div class="t" style="left:451px;top:260.75px;font-size:14px;color:#444;">4 KB</div>
<div class="t" style="left:552.2px;top:260.75px;font-size:14px;color:#333;letter-spacing:0.08px">May 11, 2020, 6:15 PM</div>
<div class="t" style="left:756.4px;top:260.75px;font-size:14px;color:#333;letter-spacing:0.05px">httpd/unix-directory</div>
<div class="t" style="left:939.7px;top:260.75px;font-size:14px;color:#444;">0755</div>
<div class="a" style="left:2.6px;top:284.1px;width:1024px;height:31.5px;background:#f7f7f7;border-bottom:1px solid #e4e4e4"></div>
<svg style="left:6px;top:291.20000000000005px" width="20.5" height="15" viewBox="0 0 20 14.6"><path d="M0 1.2 Q0 0 1.2 0 H7 L8.8 2.2 H18.8 Q20 2.2 20 3.4 V13.4 Q20 14.6 18.8 14.6 H1.2 Q0 14.6 0 13.4 Z" fill="#f0ad4e"/></svg>
<div class="t" style="left:42.3px;top:292.25px;font-size:14px;color:#444;">pipe</div>
<div class="t" style="left:451px;top:292.25px;font-size:14px;color:#444;">4 KB</div>
<div class="t" style="left:552.2px;top:292.25px;font-size:14px;color:#333;letter-spacing:0.08px">May 11, 2020, 6:15 PM</div>
<div class="t" style="left:756.4px;top:292.25px;font-size:14px;color:#333;letter-spacing:0.05px">httpd/unix-directory</div>
<div class="t" style="left:939.7px;top:292.25px;font-size:14px;color:#444;">0755</div>
<div class="a" style="left:2.6px;top:315.6px;width:1024px;height:31.5px;background:#fdfdfd;border-bottom:1px solid #e4e4e4"></div>
<svg style="left:6px;top:322.70000000000005px" width="20.5" height="15" viewBox="0 0 20 14.6"><path d="M0 1.2 Q0 0 1.2 0 H7 L8.8 2.2 H18.8 Q20 2.2 20 3.4 V13.4 Q20 14.6 18.8 14.6 H1.2 Q0 14.6 0 13.4 Z" fill="#f0ad4e"/></svg>
<div class="t" style="left:42.3px;top:323.75px;font-size:14px;color:#444;">resources</div>
<div class="t" style="left:451px;top:323.75px;font-size:14px;color:#444;">4 KB</div>
<div class="t" style="left:552.2px;top:323.75px;font-size:14px;color:#333;letter-spacing:0.08px">May 11, 2020, 6:15 PM</div>
<div class="t" style="left:756.4px;top:323.75px;font-size:14px;color:#333;letter-spacing:0.05px">httpd/unix-directory</div>
<div class="t" style="left:939.7px;top:323.75px;font-size:14px;color:#444;">0755</div>
<div class="a" style="left:2.6px;top:347.1px;width:1024px;height:31.5px;background:#f7f7f7;border-bottom:1px solid #e4e4e4"></div>
<svg style="left:6px;top:354.20000000000005px" width="20.5" height="15" viewBox="0 0 20 14.6"><path d="M0 1.2 Q0 0 1.2 0 H7 L8.8 2.2 H18.8 Q20 2.2 20 3.4 V13.4 Q20 14.6 18.8 14.6 H1.2 Q0 14.6 0 13.4 Z" fill="#f0ad4e"/></svg>
<div class="t" style="left:42.3px;top:355.25px;font-size:14px;color:#444;">status</div>
<div class="t" style="left:451px;top:355.25px;font-size:14px;color:#444;">4 KB</div>
<div class="t" style="left:552.2px;top:355.25px;font-size:14px;color:#333;letter-spacing:0.08px">May 11, 2020, 6:15 PM</div>
<div class="t" style="left:756.4px;top:355.25px;font-size:14px;color:#333;letter-spacing:0.05px">httpd/unix-directory</div>
<div class="t" style="left:939.7px;top:355.25px;font-size:14px;color:#444;">0755</div>
<div class="a" style="left:2.6px;top:378.6px;width:1024px;height:31.5px;background:#d5e8f5;border-bottom:1px solid #e4e4e4"></div>
<svg style="left:6px;top:385.70000000000005px" width="20.5" height="15" viewBox="0 0 20 14.6"><path d="M0 1.2 Q0 0 1.2 0 H7 L8.8 2.2 H18.8 Q20 2.2 20 3.4 V13.4 Q20 14.6 18.8 14.6 H1.2 Q0 14.6 0 13.4 Z" fill="#f0ad4e"/></svg>
<div class="t" style="left:42.3px;top:386.75px;font-size:14px;color:#444;">templates</div>
<div class="t" style="left:451px;top:386.75px;font-size:14px;color:#444;">4 KB</div>
<div class="t" style="left:552.2px;top:386.75px;font-size:14px;color:#333;letter-spacing:0.08px">May 11, 2020, 6:15 PM</div>
<div class="t" style="left:756.4px;top:386.75px;font-size:14px;color:#333;letter-spacing:0.05px">httpd/unix-directory</div>
<div class="t" style="left:939.7px;top:386.75px;font-size:14px;color:#444;">0755</div>
<div class="a" style="left:2.6px;top:410.1px;width:1024px;height:30.3px;background:#f7f7f7;border-bottom:1px solid #e4e4e4"></div>
<svg style="left:6px;top:417.20000000000005px" width="20.5" height="15" viewBox="0 0 20 14.6"><path d="M0 1.2 Q0 0 1.2 0 H7 L8.8 2.2 H18.8 Q20 2.2 20 3.4 V13.4 Q20 14.6 18.8 14.6 H1.2 Q0 14.6 0 13.4 Z" fill="#f0ad4e"/></svg>
<div class="t" style="left:42.3px;top:418.25px;font-size:14px;color:#444;">templates_c</div>
<div class="t" style="left:451px;top:418.25px;font-size:14px;color:#444;">4 KB</div>
<div class="t" style="left:552.2px;top:418.25px;font-size:14px;color:#333;letter-spacing:0.08px">May 11, 2020, 6:15 PM</div>
<div class="t" style="left:756.4px;top:418.25px;font-size:14px;color:#333;letter-spacing:0.05px">httpd/unix-directory</div>
<div class="t" style="left:939.7px;top:418.25px;font-size:14px;color:#444;">0755</div>
</div>
<div class="a" style="left:1355px;top:270px;width:11px;height:445px;background:#f1f1f1"></div>
<svg style="left:1356px;top:276px" width="9" height="5"><path d="M0 5 L4.5 0 L9 5 Z" fill="#a3a3a3"/></svg>
<div class="a" style="left:1357px;top:288px;width:9px;height:107px;background:#c1c1c1"></div>
<svg style="left:1359.5px;top:703.3px" width="8" height="4.2"><path d="M0 0 L4 4.2 L8 0 Z" fill="#404040"/></svg>
<div class="a" style="left:330px;top:715px;width:1036px;height:15.5px;background:#f1f1f1"></div>
<div class="a" style="left:1355px;top:715px;width:11px;height:15.5px;background:#e2e2e2"></div>
<svg style="left:336.5px;top:720.5px" width="4.6" height="6.6"><path d="M4.6 0 L0 3.3 L4.6 6.6 Z" fill="#a3a3a3"/></svg>
<div class="a" style="left:348px;top:716.5px;width:979px;height:12.5px;background:#c1c1c1"></div>
<svg style="left:1344.3px;top:720.5px" width="4.6" height="6.6"><path d="M0 0 L4.6 3.3 L0 6.6 Z" fill="#333"/></svg>
<div class="a" style="left:328px;top:646px;width:187px;height:38px;border:3px solid #e3131b"></div>
<svg style="left:482px;top:653px" width="14" height="21" viewBox="0 0 14 21"><path d="M1 1 V16.5 L4.6 13.2 L7.3 19.5 L9.8 18.4 L7.2 12.3 L12 12.3 Z" fill="#fff" stroke="#222" stroke-width="1.1" stroke-linejoin="round"/></svg>
<div class="a" style="left:1332px;top:323px;width:27px;height:61px;background:#8a8a8a;border-radius:4px;opacity:.95"></div>
<div class="t" style="left:1346px;top:354px;font-size:26px;font-weight:bold;color:#f2f2f2;-webkit-text-stroke:0.9px #f2f2f2;transform:translate(-50%,-50%) rotate(-90deg);letter-spacing:-0.2px">Web</div>
<div class="t" style="left:1346.5px;top:415.5px;font-size:25px;font-weight:bold;color:#98b8d9;-webkit-text-stroke:0.9px #98b8d9;transform:translate(-50%,-50%) rotate(-90deg);letter-spacing:0px">Miles</div>
<div class="a" style="left:0;top:733px;width:1366px;height:35px;background:#000"></div>
</body></html>
